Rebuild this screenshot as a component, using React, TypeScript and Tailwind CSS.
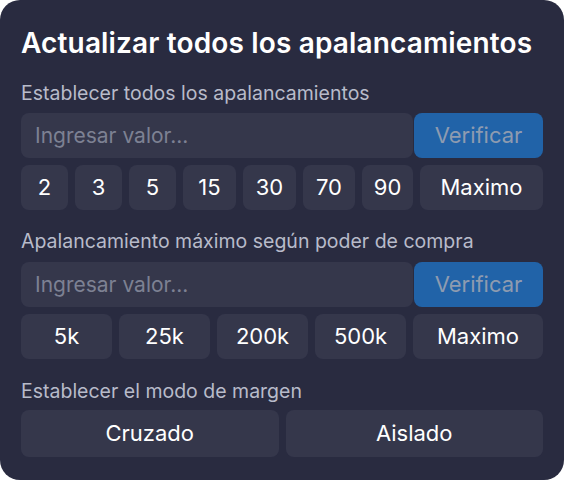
import React from "react";

const Chip = ({ label, w }: { label: string; w?: string }) => (
  <button className={`h-[45px] ${w ?? "flex-1"} rounded-[8px] bg-[#35374b] text-[22px] font-normal text-white flex items-center justify-center`}>
    {label}
  </button>
);

const InputRow = () => (
  <div className="flex h-[45px] gap-[1px]">
    <div className="flex-1 rounded-[8px] bg-[#35374b] flex items-center px-[14px] text-[21px] text-[#7d8193]">
      Ingresar valor...
    </div>
    <button className="w-[129px] rounded-[8px] bg-[#2163a8] text-[22px] text-[#8e9bb0] flex items-center justify-center">
      Verificar
    </button>
  </div>
);

export default function App() {
  return (
    <div className="w-[564px] h-[480px] bg-white" style={{ fontFamily: "Inter, 'Noto Sans', sans-serif" }}>
      <div className="w-full h-full rounded-[20px] bg-[#292b40] px-[21px] pt-[26px] flex flex-col">
        <h1 className="text-[28px] font-semibold text-white leading-[34px] tracking-[0.15px] whitespace-nowrap">
          Actualizar todos los apalancamientos
        </h1>
        <div className="mt-[22px] text-[19.5px] leading-[22px] text-[#b8bbca] whitespace-nowrap">
          Establecer todos los apalancamientos
        </div>
        <div className="mt-[9px]">
          <InputRow />
        </div>
        <div className="mt-[7px] flex gap-[7px]">
          <Chip label="2" w="w-[47px]" />
          <Chip label="3" w="w-[47px]" />
          <Chip label="5" w="w-[47px]" />
          <Chip label="15" w="w-[53px]" />
          <Chip label="30" w="w-[53px]" />
          <Chip label="70" w="w-[52px]" />
          <Chip label="90" w="w-[51px]" />
          <Chip label="Maximo" />
        </div>
        <div className="mt-[20px] text-[19.5px] leading-[22px] text-[#b8bbca] whitespace-nowrap">
          Apalancamiento máximo según poder de compra
        </div>
        <div className="mt-[10px]">
          <InputRow />
        </div>
        <div className="mt-[7px] flex gap-[7px]">
          <Chip label="5k" w="w-[91px]" />
          <Chip label="25k" w="w-[91px]" />
          <Chip label="200k" w="w-[91px]" />
          <Chip label="500k" w="w-[91px]" />
          <Chip label="Maximo" />
        </div>
        <div className="mt-[21px] text-[19.5px] leading-[22px] text-[#b8bbca] whitespace-nowrap">
          Establecer el modo de margen
        </div>
        <div className="mt-[8px] flex gap-[7px]">
          <button className="flex-1 h-[47px] rounded-[8px] bg-[#35374b] text-[22px] text-white">Cruzado</button>
          <button className="flex-1 h-[47px] rounded-[8px] bg-[#35374b] text-[22px] text-white">Aislado</button>
        </div>
      </div>
    </div>
  );
}
